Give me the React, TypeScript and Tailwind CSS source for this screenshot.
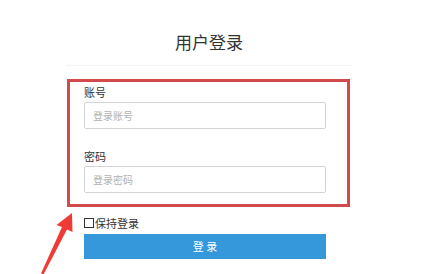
import React from 'react';

const font = { fontFamily: '"Noto Sans CJK SC", "Noto Sans", sans-serif' };

const Field = ({ label, placeholder, top }: { label: string; placeholder: string; top: string }) => (
  <div className={top}>
    <div className="h-4 text-[11px] leading-4 text-[#333]">{label}</div>
    <input
      placeholder={placeholder}
      className="mt-[2px] h-[27px] w-full rounded-[2px] border border-[#d4d4d4] bg-white px-2 text-[10px] text-[#333] outline-none placeholder:text-[#b0b0b0]"
    />
  </div>
);

const App = () => {
  return (
    <div className="relative h-[274px] w-[438px] overflow-hidden bg-white" style={font}>
      <div className="ml-[66px] w-[286px]">
        <h1 className="pt-[30px] text-center text-[17px] leading-6 text-[#333]">用户登录</h1>
        <div className="mt-[11px] h-px bg-[#f4f4f4]" />

        <div className="ml-[18px] w-[242px]">
          <Field label="账号" placeholder="登录账号" top="mt-[18px]" />
          <Field label="密码" placeholder="登录密码" top="mt-[19px]" />

          <label className="mt-[22px] flex h-4 items-center text-[11px] leading-4 text-[#333]">
            <span className="mr-px h-[10px] w-[10px] border border-[#333] bg-white" />
            保持登录
          </label>

          <button className="mt-[3px] h-[25px] w-full bg-[#3498db] text-[11px] text-white">
            登 录
          </button>
        </div>
      </div>

      {/* annotation overlay */}
      <div className="absolute left-[67px] top-[79px] h-[128px] w-[283px] border-[3px] border-[#d24a4b]" />
      <svg className="absolute left-0 top-0" width="438" height="274" viewBox="0 0 438 274">
        <polygon
          points="72,213 72.5,232 67,229.5 43.5,274.5 41,273.5 62,227 56.5,225"
          fill="#ef3b36"
        />
      </svg>
    </div>
  );
};

export default App;
